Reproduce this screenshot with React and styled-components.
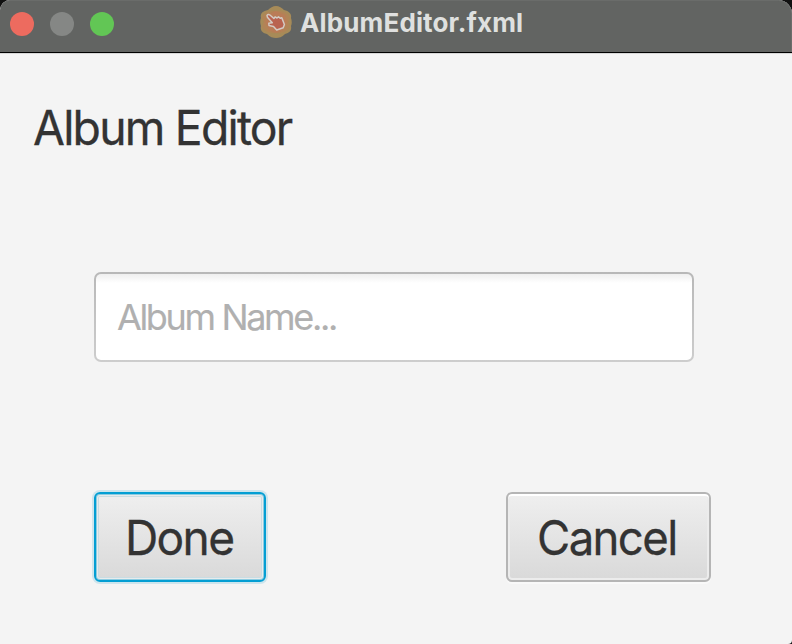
import React from 'react';
import styled, { createGlobalStyle } from 'styled-components';

const GlobalStyle = createGlobalStyle`
  * { box-sizing: border-box; }
  body { margin: 0; background: #111; overflow: hidden; }
`;

const Window = styled.div`
  width: 792px;
  height: 644px;
  display: flex;
  flex-direction: column;
  overflow: hidden;
  background: #f4f4f4;
  border-radius: 10px 14px 4px 0;
  font-family: Inter, 'Liberation Sans', sans-serif;
  color: #333;
`;

const TitleBar = styled.header`
  display: grid;
  grid-template-columns: 260px 1fr;
  flex: none;
  height: 53px;
  background: #626462;
  border-bottom: 1px solid #000;
  border-radius: 10px 14px 0 0;
  box-shadow: inset 0 1px 0 #6a6c6a, inset -1px 0 0 #6c6e6c, 0 1px 0 #d8d8d8;
`;

const Lights = styled.div`
  display: flex;
  gap: 16px;
  padding: 12px 0 0 10px;
`;

const Light = styled.span`
  width: 24px;
  height: 24px;
  border-radius: 50%;
  background: ${(p) => p.$color};
`;

const TitleGroup = styled.div`
  display: flex;
  padding-top: 6px;
  gap: 8px;
`;

const Title = styled.span`
  padding-top: 1px;
  font-size: 26px;
  line-height: 32px;
  font-weight: 700;
  letter-spacing: ${(p) => p.$tracking}px;
  color: #dfe0df;
  white-space: nowrap;
`;

const Content = styled.main`
  display: flex;
  flex-direction: column;
  padding: 46px 81px 62px 33px;
  flex: 1;
`;

const Heading = styled.h1`
  margin: 0;
  font-size: 48px;
  line-height: 58px;
  font-weight: 400;
  letter-spacing: -1.85px;
  transform: scaleX(0.965);
  transform-origin: left;
  -webkit-text-stroke: 0.3px currentColor;
  white-space: nowrap;
`;

const Field = styled.input`
  width: 600px;
  height: 90px;
  margin: 115px 0 0 61px;
  padding: 0 21px;
  border: 2px solid transparent;
  border-radius: 7px;
  outline: none;
  background:
    linear-gradient(#efefef, #fff 9px) padding-box,
    linear-gradient(#b8b8b8, #cdcdcd) border-box;
  font: 400 36px Inter, 'Liberation Sans', sans-serif;
  letter-spacing: -2.35px;
  color: #333;
  &::placeholder {
    color: #b0b0b0;
    opacity: 1;
    -webkit-text-stroke: 0.15px #b0b0b0;
  }
`;

const Actions = styled.div`
  display: flex;
  justify-content: space-between;
  margin: 130px 0 0 61px;
`;

const Button = styled.button`
  width: ${(p) => p.$width}px;
  height: 90px;
  padding: 0 0 0 29px;
  text-align: left;
  border: 2px solid ${(p) => (p.$focused ? '#039ed3' : '#b5b5b5')};
  border-radius: 6px;
  background: linear-gradient(#efefef, #d9d9d9);
  box-shadow: ${(p) => (p.$focused
    ? '0 0 0 2px #cde5ed, inset 0 0 0 1px #039ed366, inset 0 0 0 2px #e8ebec, inset 0 0 0 3px #c9dce2'
    : '0 2px 0 #f9f9f9, inset 0 2px 0 #fff, inset 0 0 0 2px #ececec')};
  font: 400 48px Inter, 'Liberation Sans', sans-serif;
  color: #333;
  white-space: nowrap;
`;

const ButtonLabel = styled.span`
  display: inline-block;
  letter-spacing: -1.7px;
  transform: scaleX(${(p) => p.$stretch});
  transform-origin: left;
  -webkit-text-stroke: 0.3px currentColor;
`;

function AppIcon() {
  return (
    <svg width="32" height="32" viewBox="0 0 32 32">
      <path d="M16 0 C19 0 22 2 24 4 C29 5 32 8 31 12 C32 15 32 18 31 20 C32 25 29 27 25 28 C22 31 19 32 16 32 C13 32 10 31 7 28 C2 27 0 24 1 20 C0 17 0 14 1 12 C0 7 3 5 8 4 C10 2 13 0 16 0Z" fill="#a78b58" />
      <g fill="#b97f55" fillOpacity="0.55">
        <path d="M2 11 Q9 2 19 6 Q28 12 30 21 Q23 30 13 26 Q4 20 2 11Z" />
        <path d="M30 11 Q23 2 13 6 Q4 12 2 21 Q9 30 19 26 Q28 20 30 11Z" />
      </g>
      <path d="M7 9 L16 5 L25 9 L26 17 L23 24 L16 27 L9 24 L6 17Z" fill="#bc7a58" fillOpacity="0.7" />
      <path d="M7 9.3 C8 7.8 9.5 8.5 10.5 9.5 L13.9 12.5 L15.1 10.9 L17 12 L18.5 10.8 L20.2 12.3 L21.8 11.8 L24.4 18.5 L23.2 21.8 L16.7 24 L13.5 20.5 L9 19.4 L8.8 17.2 L12.3 16.8 L7.4 11.2Z" fill="#b96350" stroke="#d3cbc4" strokeWidth="1.5" strokeLinejoin="round" />
    </svg>
  );
}

export default function App() {
  return (
    <>
      <GlobalStyle />
      <Window>
        <TitleBar>
          <Lights>
            <Light $color="#ed6b5f" />
            <Light $color="#858785" />
            <Light $color="#62c655" />
          </Lights>
          <TitleGroup>
            <AppIcon />
            <Title $tracking={0.14}>AlbumEditor.fxml</Title>
          </TitleGroup>
        </TitleBar>
        <Content>
          <Heading>Album Editor</Heading>
          <Field placeholder="Album Name..." />
          <Actions>
            <Button $focused $width={172}><ButtonLabel $stretch={0.96}>Done</ButtonLabel></Button>
            <Button $width={205}><ButtonLabel $stretch={0.948}>Cancel</ButtonLabel></Button>
          </Actions>
        </Content>
      </Window>
    </>
  );
}
